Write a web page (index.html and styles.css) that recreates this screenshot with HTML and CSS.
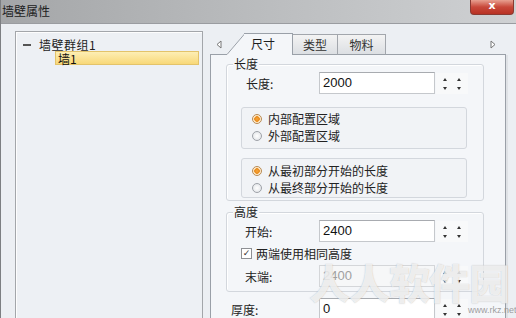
FILE: index.html
```html
<!DOCTYPE html>
<html>
<head>
<meta charset="utf-8">
<link rel="stylesheet" href="styles.css">
</head>
<body>
<div class="window">
  <div class="titlebar">
    <span class="title">墙壁属性</span>
    <span class="close">x</span>
  </div>
  <div class="main">
    <div class="tree">
      <div class="tree-row"><span class="minus"></span><span class="tree-text">墙壁群组1</span></div>
      <div class="tree-row child"><span class="sel">墙1</span></div>
    </div>
    <div class="tabs">
      <div class="strip">
        <div class="arrow-l"><svg width="6" height="9" viewBox="0 0 6 9"><path d="M5 1 L1 4.5 L5 8 Z" fill="#fff" stroke="#777" stroke-width="1"/></svg></div>
        <svg class="slant" width="18" height="22" viewBox="0 0 18 22"><path d="M0 22 L18 1 L18 22 Z" fill="#f4f6f9"/><path d="M0 21.5 L1 21.5 L18.5 1" fill="none" stroke="#9aa0a8" stroke-width="1"/></svg>
        <div class="tab active">尺寸</div>
        <div class="tab t2">类型</div>
        <div class="tab t3">物料</div>
        <div class="spacer"><svg width="6" height="9" viewBox="0 0 6 9"><path d="M1 1 L5 4.5 L1 8 Z" fill="#fff" stroke="#777" stroke-width="1"/></svg></div>
      </div>
      <div class="panel">
        <div class="group g1">
          <div class="gtitle">长度</div>
          <div class="row r-len">
            <span class="lbl">长度:</span>
            <span class="input">2000</span>
            <span class="spin"><span class="col"><i class="up"></i><i class="dn"></i></span><span class="col"><i class="up"></i><i class="dn"></i></span></span>
          </div>
          <div class="rbox rb1">
            <div class="ritem"><span class="radio on"></span>内部配置区域</div>
            <div class="ritem"><span class="radio"></span>外部配置区域</div>
          </div>
          <div class="rbox rb2">
            <div class="ritem"><span class="radio on"></span>从最初部分开始的长度</div>
            <div class="ritem"><span class="radio"></span>从最终部分开始的长度</div>
          </div>
        </div>
        <div class="group g2">
          <div class="gtitle">高度</div>
          <div class="row r-start">
            <span class="lbl">开始:</span>
            <span class="input">2400</span>
            <span class="spin"><span class="col"><i class="up"></i><i class="dn"></i></span><span class="col"><i class="up"></i><i class="dn"></i></span></span>
          </div>
          <div class="crow"><span class="check">✓</span>两端使用相同高度</div>
          <div class="row r-end">
            <span class="lbl">末端:</span>
            <span class="input dis">2400</span>
            <span class="spin"><span class="col"><i class="up"></i><i class="dn"></i></span><span class="col"><i class="up"></i><i class="dn"></i></span></span>
          </div>
        </div>
        <div class="row r-thick">
          <span class="lbl wide">厚度:</span>
          <span class="input">0</span>
          <span class="spin"><span class="col"><i class="up"></i><i class="dn"></i></span><span class="col"><i class="up"></i><i class="dn"></i></span></span>
        </div>
      </div>
    </div>
  </div>
  <div class="wm">人人软件园</div>
  <div class="wm-url">www.rkz.net</div>
</div>
</body>
</html>
```

FILE: styles.css
```css
* { box-sizing: border-box; }
html, body { margin: 0; padding: 0; }
body {
  width: 516px;
  height: 318px;
  overflow: hidden;
  font-family: "Noto Sans CJK SC", "Noto Sans", sans-serif;
  font-size: 12px;
  color: #1e1e1e;
  background: #eceff3;
}
.window {
  position: relative;
  width: 516px;
  height: 318px;
  overflow: hidden;
  border-left: 1px solid #7d7f82;
  background: #eceff3;
}
.titlebar {
  height: 24px;
  display: flex;
  justify-content: space-between;
  align-items: flex-start;
  background: linear-gradient(to right, #a4a6a8 0%, #b8babc 45%, #cfd1d3 100%);
  border-bottom: 1px solid #9a9ca0;
}
.title {
  padding-left: 1px;
  line-height: 22px;
  font-size: 12px;
  color: #202020;
}
.close {
  width: 44px;
  height: 15px;
  margin-right: 2px;
  border: 1px solid #8a3a32;
  border-top: none;
  border-radius: 0 0 4px 4px;
  background: linear-gradient(#e8a090, #c8483a 50%, #b83224);
  color: #fff;
  font-family: "DejaVu Sans", sans-serif;
  font-weight: bold;
  font-size: 11px;
  line-height: 12px;
  text-align: center;
}
.main {
  display: flex;
  padding: 7px 0 0 14px;
  height: 294px;
}
.tree {
  width: 188px;
  height: 300px;
  border: 1px solid #a3a6aa;
  box-shadow: inset 1px 1px 0 #fdfdfd;
  background: #edf0f4;
  padding-top: 6px;
}
.tree-row {
  display: flex;
  align-items: center;
  height: 13px;
  line-height: 13px;
  font-size: 12px;
}
.minus {
  width: 8px;
  height: 2px;
  background: #555;
  margin: 0 8px 0 7px;
}
.tree-text { letter-spacing: 0.5px; }
.child { padding-left: 39px; height: 13px; margin-top: 0; }
.sel {
  display: block;
  width: 144px;
  height: 14px;
  line-height: 14px;
  padding-left: 2px;
  background: linear-gradient(#fdeeb4, #f8d878);
  border: 1px solid #e3c36a;
  color: #111;
}
.tabs {
  width: 296px;
  margin-left: 7px;
  display: flex;
  flex-direction: column;
}
.strip {
  height: 24px;
  display: flex;
  align-items: flex-end;
}
.arrow-l {
  width: 16px;
  height: 24px;
  border-bottom: 1px solid #9aa0a8;
  padding: 9px 0 0 6px;
}
.arrow-l svg, .spacer svg { display: block; }
.slant { display: block; width: 18px; height: 22px; }
.tab {
  height: 21px;
  line-height: 20px;
  text-align: center;
  font-size: 12px;
}
.active {
  width: 49px;
  height: 22px;
  background: #f4f6f9;
  border-top: 1px solid #9aa0a8;
  border-right: 1px solid #9aa0a8;
  padding-right: 10px;
}
.t2, .t3 {
  background: linear-gradient(#f3f3f3, #dcdfe3);
  border-top: 1px solid #a2a6ac;
  border-right: 1px solid #a2a6ac;
  border-bottom: 1px solid #9aa0a8;
  color: #333;
}
.t2 { width: 45px; }
.t3 { width: 48px; }
.spacer {
  flex: 1;
  height: 24px;
  border-bottom: 1px solid #9aa0a8;
  display: flex;
  justify-content: flex-end;
  padding: 9px 10px 0 0;
}
.panel {
  flex: 1;
  background: #f4f6f9;
  border-left: 1px solid #9aa0a8;
  border-right: 1px solid #9aa0a8;
  box-shadow: 2px 0 0 #dfe2e6;
  padding: 0 21px 0 15px;
}
.group {
  border: 1px solid #d3d7dd;
  border-radius: 3px;
  box-shadow: inset 1px 1px 0 #fff;
}
.g1 { margin-top: 9px; height: 137px; }
.g2 { margin-top: 11px; height: 80px; }
.gtitle {
  width: fit-content;
  margin: -8px 0 0 6px;
  padding: 0 1px;
  line-height: 14px;
  height: 14px;
  background: #f4f6f9;
  font-size: 12px;
}
.row {
  display: flex;
  align-items: center;
  height: 22px;
  padding-left: 19px;
}
.r-len { margin-top: 1px; }
.r-start { margin-top: 1px; padding-left: 18px; }
.r-end { margin-top: 5px; padding-left: 18px; }
.r-thick { margin-top: 6px; padding-left: 5px; }
.lbl { width: 73px; font-size: 12px; color: #222; }
.r-start .lbl, .r-end .lbl { width: 74px; }
.lbl.wide { width: 88px; }
.input {
  width: 116px;
  height: 22px;
  background: #fff;
  border: 1px solid #c5c8cc;
  border-top-color: #a8abb0;
  font-family: "Liberation Sans", Arial, sans-serif;
  font-size: 13px;
  line-height: 20px;
  padding-left: 3px;
  color: #111;
}
.input.dis { background: #f6f7f8; color: #a0a0a0; border-color: #d4d6d9; }
.spin {
  width: 32px;
  height: 21px;
  margin-left: 1px;
  background: #f8f9fa;
  display: flex;
  justify-content: space-around;
  padding: 5px 2px 0;
}
.col { display: flex; flex-direction: column; align-items: center; gap: 6px; }
.up, .dn { display: block; width: 0; height: 0; border-left: 2.5px solid transparent; border-right: 2.5px solid transparent; }
.up { border-bottom: 3px solid #333; }
.dn { border-top: 3px solid #333; }
.rbox {
  margin-left: 14px;
  width: 226px;
  border: 1px solid #d3d7dd;
  border-radius: 3px;
  background: #f1f3f6;
}
.rb1 { margin-top: 13px; height: 42px; padding-top: 2px; }
.rb2 { margin-top: 9px; height: 40px; padding-top: 3px; }
.ritem {
  display: flex;
  align-items: center;
  height: 17px;
  padding-left: 10px;
  font-size: 12px;
  color: #222;
}
.radio {
  width: 10px;
  height: 10px;
  border-radius: 50%;
  border: 1px solid #9ea2a8;
  background: radial-gradient(circle, #fff, #dde0e4);
  margin-right: 6px;
}
.radio.on {
  background: radial-gradient(circle, #f6a53a 0, #e88a1c 2.5px, #fde2b8 3px, #fff 5px);
  border-color: #b88a52;
}
.crow {
  display: flex;
  align-items: center;
  height: 14px;
  margin-top: 4px;
  padding-left: 14px;
  font-size: 12px;
  color: #222;
}
.check {
  width: 11px;
  height: 11px;
  border: 1px solid #8e9094;
  background: #fff;
  font-family: "DejaVu Sans", sans-serif;
  font-size: 9px;
  line-height: 9px;
  text-align: center;
  color: #333;
  margin-right: 4px;
}
.wm {
  position: absolute;
  left: 308px;
  top: 258px;
  font-family: "Noto Sans CJK SC", sans-serif;
  font-weight: 900;
  font-size: 41px;
  line-height: 46px;
  color: rgba(255, 255, 255, 0.75);
  text-shadow: 0 0 1px rgba(120, 120, 120, 0.5);
  letter-spacing: -1px;
  pointer-events: none;
}
.wm-url {
  position: absolute;
  left: 467px;
  top: 304px;
  font-family: "Liberation Sans", Arial, sans-serif;
  font-size: 9px;
  line-height: 12px;
  color: rgba(140, 140, 140, 0.85);
  pointer-events: none;
}
```
